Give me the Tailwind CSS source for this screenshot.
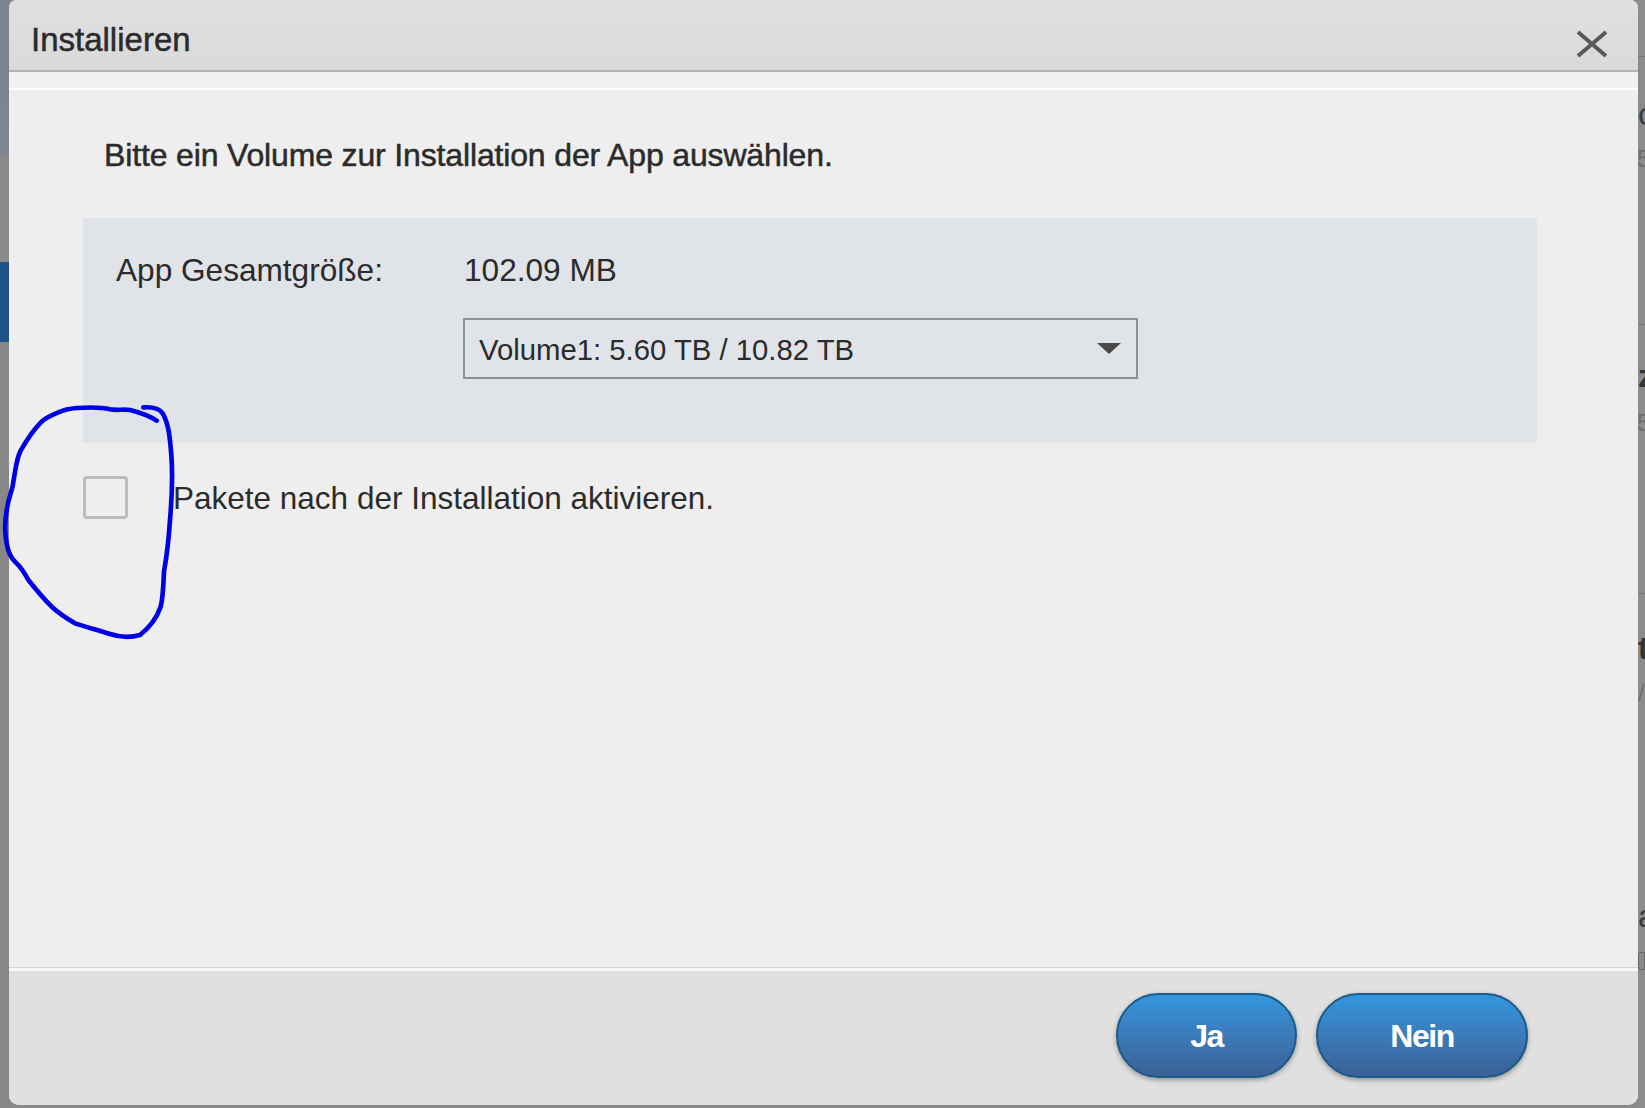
<!DOCTYPE html>
<html lang="de">
<head>
<meta charset="utf-8">
<script src="https://cdn.jsdelivr.net/npm/@tailwindcss/browser@4"></script>
<title>Installieren</title>
</head>
<body class="m-0 w-[1645px] h-[1108px] overflow-hidden bg-[#898989] font-['Liberation_Sans',Arial,sans-serif] text-[#2b2b2b] relative">
<div class="flex w-[1645px] h-[1108px]">
  <!-- left background strip -->
  <div class="w-[9px] h-full flex flex-col shrink-0">
    <div class="h-[155px] bg-gradient-to-b from-[#7b8290] to-[#7f8690]"></div>
    <div class="h-[107px] bg-[#8b8b8b]"></div>
    <div class="h-[80px] bg-[#1c5288]"></div>
    <div class="flex-1 bg-[#878787]"></div>
  </div>

  <!-- dialog -->
  <div class="w-[1629px] h-[1105px] shrink-0 flex flex-col rounded-t-[8px] rounded-b-[10px] overflow-hidden bg-[#f0f0f0]">
    <header class="h-[72px] shrink-0 flex items-start justify-between bg-gradient-to-b from-[#e0e0e0] to-[#dadada] border-b-2 border-[#b4b4b4]">
      <h1 class="ml-[22px] mt-[21px] text-[33px] leading-[38px] font-normal [-webkit-text-stroke:0.5px_#2b2b2b]">Installieren</h1>
      <svg class="mt-[30px] mr-[30px]" width="32" height="28" viewBox="0 0 32 28" fill="none" stroke="#5a5a5a" stroke-width="4"><path d="M2 2 L30 26 M30 2 L2 26"/></svg>
    </header>
    <div class="h-[18px] shrink-0 bg-[#f1f1f1] border-b-2 border-white"></div>
    <main class="flex-1 bg-[#eeeeee] pl-[74px] pr-[101px] flex flex-col">
      <p class="ml-[21px] mt-[47px] text-[32px] leading-[36px] tracking-[-0.15px] [-webkit-text-stroke:0.5px_#2b2b2b]">Bitte ein Volume zur Installation der App auswählen.</p>
      <section class="mt-[45px] h-[225px] bg-[#e0e3e8] pl-[33px] pt-[33px] text-[31.6px]">
        <div class="flex items-center h-[40px]">
          <span class="w-[348px] shrink-0">App Gesamtgröße:</span>
          <span>102.09 MB</span>
        </div>
        <div class="ml-[347px] mt-[27px] w-[675px] h-[61px] border-2 border-[#8e9298] flex items-center justify-between pl-[14px] pr-[15px] pt-[2px] text-[29.3px]">
          <span>Volume1: 5.60 TB / 10.82 TB</span>
          <svg class="-mt-[3px]" width="24" height="11" viewBox="0 0 24 11"><path d="M0 0 H24 L12 11 Z" fill="#4a4a4a"/></svg>
        </div>
      </section>
      <label class="mt-[33px] flex items-center gap-[45px]">
        <span class="w-[45px] h-[43px] shrink-0 border-[3px] border-[#bcbcbc] rounded-[4px] bg-[#efefef]"></span>
        <span class="text-[31.5px] leading-[42px]">Pakete nach der Installation aktivieren.</span>
      </label>
    </main>
    <div class="h-[1px] shrink-0 bg-[#d4d4d4]"></div>
    <div class="h-[3px] shrink-0 bg-[#f8f8f8]"></div>
    <footer class="h-[134px] shrink-0 bg-[#e0e0e0] flex justify-end items-start gap-[19px] pr-[110px] pt-[22px]">
      <button class="w-[181px] h-[85px] rounded-[43px] border-2 border-[#1a5a86] bg-gradient-to-b from-[#3296de] to-[#3c6096] text-white text-[32px] font-bold tracking-[-1.5px] shadow-[0_2px_5px_rgba(0,0,0,0.35)]">Ja</button>
      <button class="w-[212px] h-[85px] rounded-[43px] border-2 border-[#1a5a86] bg-gradient-to-b from-[#3296de] to-[#3c6096] text-white text-[32px] font-bold tracking-[-1.5px] shadow-[0_2px_5px_rgba(0,0,0,0.35)]">Nein</button>
    </footer>
  </div>

  <!-- right background strip with cut-off page text -->
  <div class="relative w-[7px] h-full overflow-hidden shrink-0 bg-[#8c8c8c]">
    <span class="absolute left-0 top-[96px] text-[32px] leading-[36px] text-[#3a3a3a]">c</span>
    <span class="absolute left-[-1px] top-[146px] text-[24px] leading-[26px] text-[#6e6e6e]">5</span>
    <div class="absolute left-0 top-[56px] w-full h-[1px] bg-[#777]"></div>
    <div class="absolute left-0 top-[324px] w-full h-[1px] bg-[#777]"></div>
    <span class="absolute left-0 top-[358px] text-[32px] leading-[36px] font-bold text-[#333]">z</span>
    <span class="absolute left-[-1px] top-[410px] text-[24px] leading-[26px] text-[#6e6e6e]">5</span>
    <div class="absolute left-0 top-[593px] w-full h-[1px] bg-[#777]"></div>
    <span class="absolute left-0 top-[630px] text-[32px] leading-[36px] font-bold text-[#333]">t</span>
    <span class="absolute left-0 top-[680px] text-[24px] leading-[26px] text-[#6e6e6e]">/</span>
    <span class="absolute left-0 top-[898px] text-[32px] leading-[36px] text-[#3a3a3a]">a</span>
    <div class="absolute left-0 top-[952px] w-full h-[18px] rounded-l-[3px] border border-[#666] bg-[#8a8a8a]"></div>
  </div>
</div>

<!-- hand-drawn annotation -->
<svg class="absolute left-0 top-[380px] pointer-events-none" width="300" height="280" viewBox="0 0 900 840" fill="none" stroke="#0000e6" stroke-width="14" stroke-linecap="round" stroke-linejoin="round">
  <path d="M470 122 C455 112 430 100 390 90 C370 87 350 92 330 88 C300 80 260 82 230 84 C205 86 190 90 175 97 C155 106 140 110 125 125 C100 150 80 180 62 212 C48 240 46 275 40 305 C38 330 28 345 22 380 C14 420 12 450 20 490 C24 515 30 530 45 545 C60 558 72 575 85 600 C105 625 130 655 155 680 C175 698 200 715 225 730 C260 742 295 750 330 762 C360 772 395 772 420 765 C445 745 470 715 482 680 C490 650 490 610 492 575 C500 530 506 480 510 420 C516 350 518 280 514 225 C510 175 506 130 488 100 C478 85 460 80 430 82"/>
</svg>
</body>
</html>
